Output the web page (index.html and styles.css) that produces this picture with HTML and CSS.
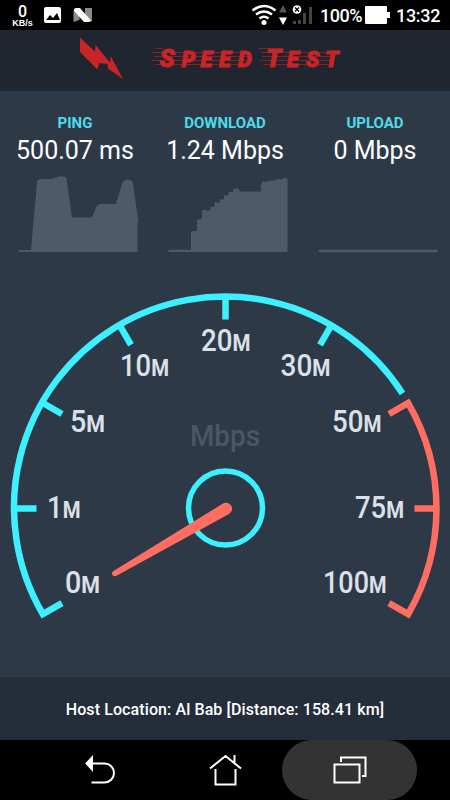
FILE: index.html
```html
<!DOCTYPE html>
<html lang="en">
<head>
    <meta charset="UTF-8">
    <meta name="viewport" content="width=device-width, initial-scale=1.0">
    <title>Speed Test</title>
    <link rel="stylesheet" href="styles.css">
</head>
<body>
    <div class="status-bar">
        <div class="net-speed"><span class="net-value">0</span><span class="net-unit">KB/s</span></div>
        <svg class="status-left" width="50" height="30" viewBox="42 0 50 30">
            <rect x="44" y="7" width="17" height="16" rx="2" fill="#fff"/>
            <path d="M46 20l4-5 3 3 4-5 3 7z" fill="#000"/>
            <path d="M73.500 10l6 4v6l-6 2zM85 8h7v13l-2 1-5-7z" fill="#8a8a8a"/>
            <path d="M74 9l2-1h4l11 12.500-2 1.500h-5L74 11z" fill="#fff"/>
        </svg>
        <svg class="status-right" width="66" height="30" viewBox="250 0 66 30">
            <g fill="none" stroke="#fff" stroke-width="2.600">
                <path d="M252.500 10.500q11.500-9 23 0M256 14.500q8-6 16 0M259.500 18.500q4.500-3.500 9 0"/>
            </g>
            <circle cx="264" cy="22.500" r="2.500" fill="#fff"/>
            <path d="M279 12.500l4-7.500 4 7.500z" fill="#555"/>
            <path d="M279 17.500h8l-4 7.500z" fill="#fff"/>
            <path d="M293 21h3v3h-3zM298 20h3v4h-3zM303 13h3v11h-3zM309 7h3v17h-3z" fill="#444"/>
            <circle cx="297" cy="9.500" r="4.300" fill="#fff"/>
            <path d="M295 7.500l4 4m0-4l-4 4" stroke="#000" stroke-width="1.300"/>
        </svg>
        <span class="battery-text">100%</span>
        <svg class="battery" width="26" height="18" viewBox="0 0 26 18">
            <path d="M1 0h20a1 1 0 0 1 1 1v5h3v6h-3v5a1 1 0 0 1-1 1H1a1 1 0 0 1-1-1V1a1 1 0 0 1 1-1z" fill="#fff"/>
        </svg>
        <span class="clock">13:32</span>
    </div>

    <div class="header">
        <svg width="450" height="62" viewBox="0 30 450 62">
            <path d="M80 37.500L95 51.500l.500-6.500L110 62.500l.700-6.500L123 79 108 68.500l-.500-4.500-8.500-1-1.500 6.500L80 52z" fill="#c92427"/>
            <path class="speed-lines" d="M155 48.500h8M259 48.500h10M151 52.500h100M261 52.500h73M154 56.500h97M262 56.500h71M152 60.500h98M260 60.500h72M155 64.500h93M263 64.500h68"/>
            <text class="logo-text" y="66.500"><tspan class="cap" x="159.500">S</tspan><tspan x="181.500">P</tspan><tspan x="200.500">E</tspan><tspan x="219">E</tspan><tspan x="238">D</tspan><tspan class="cap" x="266">T</tspan><tspan x="287">E</tspan><tspan x="306">S</tspan><tspan x="325">T</tspan></text>
        </svg>
    </div>

    <div class="metrics">
        <div class="metric">
            <div class="metric-label">PING</div>
            <div class="metric-value">500.07 ms</div>
            <svg width="120" height="80" viewBox="18 173 120 80">
                <path d="M18.500 250H31l6-68q.500-3 4-3h10q4-2 9-2.500 6-.500 6.500 2L72 217.500h18q2 0 3-2l3-8q1.500-3.500 5-3.500h15l6-20q1.500-4.500 5-4.500 5 0 6 4l5.500 39h-1V252h-119z"/>
            </svg>
        </div>
        <div class="metric">
            <div class="metric-label">DOWNLOAD</div>
            <div class="metric-value">1.24 Mbps</div>
            <svg width="120" height="80" viewBox="168 173 120 80">
                <path d="M168.500 249.700H191V232l2-1h4v-11l2-.700h3V210.500l2-.800 4 1 2.500-.700v-3h4V202l5 1v-3.500h4.500V195.500l4.500-.500v-3h4.500V189.500l4-1.500 3.500 3.500H259l1.500 1.500.500-8 1.500-3.500 4 .500 4-1.500 3 .200 4-1.700 4 .500 2-1.500 4 .500V252H168.500z"/>
            </svg>
        </div>
        <div class="metric">
            <div class="metric-label">UPLOAD</div>
            <div class="metric-value">0 Mbps</div>
            <svg width="120" height="80" viewBox="318 173 120 80">
                <path d="M319 249.700h118.500v2.500H319z"/>
            </svg>
        </div>
    </div>

    <div class="gauge">
        <svg width="450" height="411" viewBox="0 266 450 411">
            <g class="scale low">
                <path d="M62 603.200L42.800 614A211 211 0 0 1 402.500 393.500"/>
                <path d="M14.500 508.500H36.500M42.800 403L62 414M120 325.800L131 344.800M225.500 297.500V319.500M331 325.800L320 344.800"/>
            </g>
            <path class="scale high" d="M389 414L408.200 403A211 211 0 0 1 408.200 614L389 603.200M436.500 508.500H414.500"/>
            <text class="unit" x="190" y="445.500" textLength="70" lengthAdjust="spacingAndGlyphs">Mbps</text>
            <circle class="hub" cx="225.500" cy="508" r="37"/>
            <path class="needle" d="M113.500 571L223 503.500a6 6 0 1 1 6 10.500L116 576a2.800 2.800 0 0 1-2.500-5z"/>
            <g class="marks">
                <text x="65" y="593" textLength="35" lengthAdjust="spacingAndGlyphs">0<tspan class="m">M</tspan></text>
                <text x="47" y="518" textLength="33.500" lengthAdjust="spacingAndGlyphs">1<tspan class="m">M</tspan></text>
                <text x="70" y="432" textLength="35" lengthAdjust="spacingAndGlyphs">5<tspan class="m">M</tspan></text>
                <text x="120" y="376" textLength="49" lengthAdjust="spacingAndGlyphs">10<tspan class="m">M</tspan></text>
                <text x="201" y="351" textLength="49.500" lengthAdjust="spacingAndGlyphs">20<tspan class="m">M</tspan></text>
                <text x="280.500" y="376" textLength="50" lengthAdjust="spacingAndGlyphs">30<tspan class="m">M</tspan></text>
                <text x="332" y="432" textLength="49.500" lengthAdjust="spacingAndGlyphs">50<tspan class="m">M</tspan></text>
                <text x="355" y="518" textLength="49" lengthAdjust="spacingAndGlyphs">75<tspan class="m">M</tspan></text>
                <text x="323" y="593" textLength="63.500" lengthAdjust="spacingAndGlyphs">100<tspan class="m">M</tspan></text>
            </g>
        </svg>
    </div>

    <div class="host">Host Location: Al Bab [Distance: 158.41 km]</div>

    <div class="nav-bar">
        <svg width="32" height="30" viewBox="84 755 32 30">
            <path d="M91 763.500h13.500a9.500 9.500 0 0 1 0 19H91.500"/>
            <path d="M92 757.500v12l-5.500-6z" fill="#fff"/>
        </svg>
        <svg width="34" height="32" viewBox="208 754 34 32">
            <path d="M210 768.500L225.500 756 241 768.500M234.500 762.500V755M215.500 769v15.500h20V769"/>
        </svg>
        <div class="recent">
            <svg width="34" height="28" viewBox="333 756 34 28">
                <path d="M334.500 764.500h25v18h-25zM341 762v-4.500h24.500v18.500H362"/>
            </svg>
        </div>
    </div>
</body>
</html>
```
FILE: styles.css
```css
body {
    margin: 0;
    width: 450px;
    height: 800px;
    display: flex;
    flex-direction: column;
    overflow: hidden;
    background-color: #2e3948;
    font-family: Roboto, sans-serif;
    color: #fff;
}
svg {
    display: block;
    flex-shrink: 0;
}
.status-bar {
    display: flex;
    align-items: center;
    height: 30px;
    background-color: #000;
    white-space: nowrap;
}
.net-speed {
    display: flex;
    flex-direction: column;
    align-items: center;
    width: 42px;
    padding-left: 3px;
    padding-top: 2px;
    box-sizing: border-box;
    font-weight: 700;
}
.net-value {
    font-size: 16px;
    font-weight: 500;
    line-height: 14px;
}
.net-unit {
    font-family: "Liberation Sans", Arial, sans-serif;
    font-size: 9px;
    line-height: 9px;
}
.status-right {
    margin-left: 158px;
}
.battery-text {
    width: 49px;
    padding-left: 4px;
    box-sizing: border-box;
    font-size: 18px;
    font-weight: 500;
    letter-spacing: -0.5px;
    line-height: 30px;
    padding-top: 1px;
}
.clock {
    margin-left: 5px;
    padding-top: 1px;
    font-size: 18px;
    font-weight: 500;
    letter-spacing: -0.3px;
}
.header {
    height: 62px;
    background-color: #1f262f;
    border-bottom: 1px solid #2f3a4d;
    box-sizing: border-box;
}
.speed-lines {
    fill: none;
    stroke: #8c1d22;
    stroke-width: 1;
}
.logo-text {
    font-family: Roboto, sans-serif;
    font-size: 22px;
    font-weight: 900;
    font-style: italic;
    fill: #c92427;
    stroke: #c92427;
    stroke-width: 0.9;
}
.cap {
    font-size: 25px;
}
.metrics {
    display: grid;
    grid-template-columns: repeat(3, 150px);
    height: 174px;
    padding-top: 22px;
    box-sizing: border-box;
}
.metric {
    display: flex;
    flex-direction: column;
    align-items: center;
}
.metric-label {
    font-size: 15px;
    font-weight: 700;
    line-height: 18px;
    color: #4ddbe8;
}
.metric-value {
    height: 41px;
    font-size: 25px;
    line-height: 37px;
}
.metric svg {
    margin-left: 6px;
    fill: #4e5a69;
}
.gauge {
    height: 411px;
}
.scale {
    fill: none;
    stroke-width: 6.5;
}
.low, .hub {
    stroke: #3cf0ff;
}
.high {
    stroke: #ff6e60;
}
.hub {
    fill: none;
    stroke-width: 5.5;
}
.needle {
    fill: #ff6e60;
}
.marks {
    font-size: 31px;
    font-weight: 500;
    fill: #dce0e8;
}
.m {
    font-size: 23px;
    font-weight: 700;
}
.unit {
    font-size: 30px;
    font-weight: 500;
    fill: #4b5667;
}
.host {
    height: 63px;
    background-color: #242d39;
    font-size: 16px;
    font-weight: 500;
    letter-spacing: 0.1px;
    line-height: 65px;
    text-align: center;
}
.nav-bar {
    display: flex;
    align-items: center;
    height: 60px;
    padding-left: 84px;
    background-color: #000;
}
.nav-bar svg {
    margin-right: 92px;
    fill: none;
    stroke: #fff;
    stroke-width: 2;
}
.nav-bar svg + svg {
    margin-right: 40px;
}
.nav-bar .recent {
    display: flex;
    align-items: center;
    justify-content: center;
    width: 135px;
    height: 60px;
    border-radius: 30px;
    background-color: #333;
}
.nav-bar .recent svg {
    margin: 0;
}
```
